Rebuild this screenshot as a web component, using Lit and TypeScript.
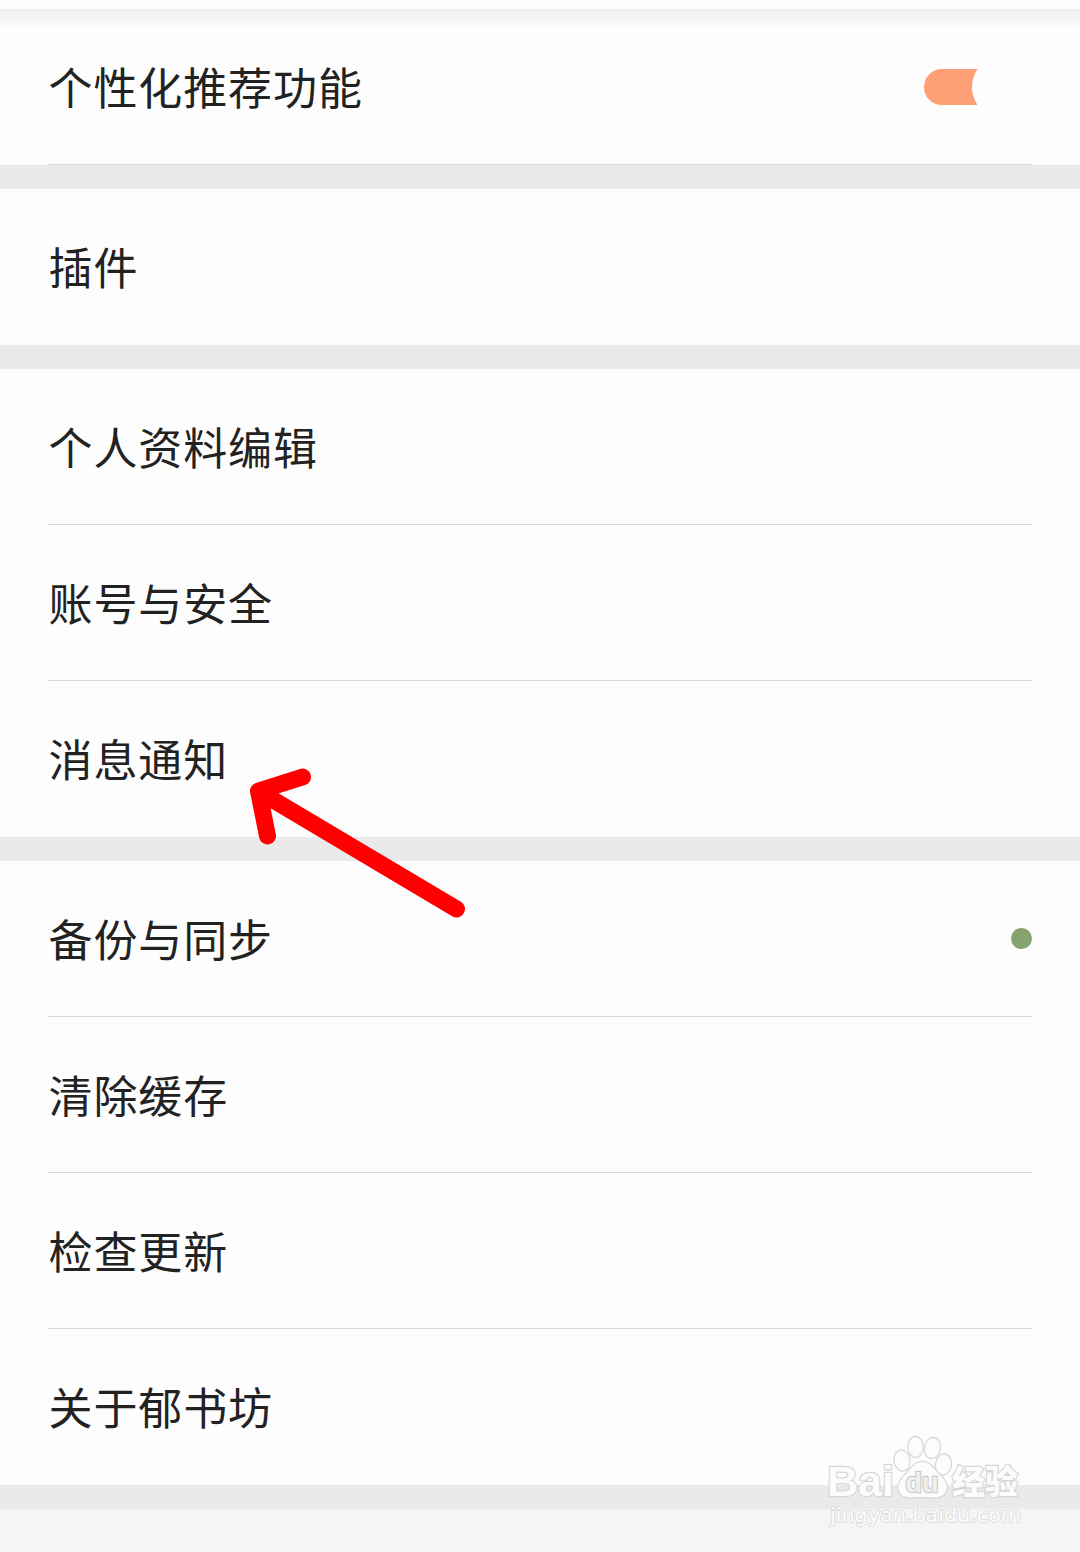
import { LitElement, html, css, svg, nothing } from "lit";
import { customElement, property } from "lit/decorators.js";

interface Item {
  label: string;
  toggle?: boolean;
  dot?: boolean;
  line?: boolean;
}

const groups: Item[][] = [
  [{ label: "个性化推荐功能", toggle: true, line: true }],
  [{ label: "插件" }],
  [
    { label: "个人资料编辑", line: true },
    { label: "账号与安全", line: true },
    { label: "消息通知" },
  ],
  [
    { label: "备份与同步", dot: true, line: true },
    { label: "清除缓存", line: true },
    { label: "检查更新", line: true },
    { label: "关于郁书坊" },
  ],
];

@customElement("setting-row")
export class SettingRow extends LitElement {
  @property({ attribute: false }) item!: Item;

  static styles = css`
    :host {
      display: block;
      padding: 0 48px;
    }
    .row {
      box-sizing: border-box;
      height: 156px;
      display: flex;
      align-items: center;
      justify-content: space-between;
      border-bottom: 1px solid transparent;
    }
    .line {
      border-bottom-color: #d9d9d9;
    }
    .label {
      font-size: 44px;
      letter-spacing: 0.9px;
      line-height: 66px;
      padding: 0 0 1px 0.5px;
      color: #222;
      white-space: nowrap;
    }
    .dot {
      width: 21px;
      height: 21px;
      border-radius: 50%;
      background: #84a36e;
    }
    .toggle {
      display: block;
      width: 108px;
      height: 60px;
    }
  `;

  render() {
    const { label, toggle, dot, line } = this.item;
    return html`<div class="row ${line ? "line" : ""}">
      <span class="label">${label}</span>
      ${toggle
        ? html`<svg class="toggle" viewBox="0 0 108 60" role="switch" aria-checked="true">
            <path d="M18 12H53.5Q43 30 53.5 48H18A18 18 0 0 1 18 12Z" fill="#ff9f75" />
            <circle cx="78" cy="30" r="30" fill="#fefefe" />
          </svg>`
        : nothing}
      ${dot ? html`<span class="dot"></span>` : nothing}
    </div>`;
  }
}

@customElement("app-root")
export class AppRoot extends LitElement {
  static styles = css`
    :host {
      display: block;
      position: relative;
      width: 1080px;
      height: 1552px;
      overflow: hidden;
      background: #f5f5f5;
      font-family: "Noto Sans CJK SC", sans-serif;
    }
    .page {
      display: flex;
      flex-direction: column;
    }
    .bar {
      height: 9px;
      background: #fdfdfd;
    }
    .group {
      background: #fdfdfd;
      border-bottom: 24px solid #eaeaea;
    }
    .first {
      background: linear-gradient(#ededed, #f6f6f6 10px, #fafafa 16px, #fdfdfd 18px);
    }
    .overlay {
      position: absolute;
      inset: 0;
      pointer-events: none;
    }
    .mark {
      fill: #fcfcfc;
      stroke: #d6d6d6;
      stroke-width: 2.4;
      paint-order: stroke;
      stroke-linejoin: round;
    }
    .brand {
      font: bold 43px "Liberation Sans", sans-serif;
    }
    .du {
      font: bold 28px "Liberation Sans", sans-serif;
      fill: #f0f0f0;
      stroke: #cbcbcb;
    }
    .cn {
      font: 900 33px "Noto Sans CJK SC", sans-serif;
    }
    .site {
      font: 20px "DejaVu Sans", sans-serif;
      stroke: #dedede;
      stroke-width: 2;
    }
  `;

  render() {
    return html`
      <div class="page">
        <div class="bar"></div>
        ${groups.map(
          (g, i) => html`<div class="group ${i === 0 ? "first" : ""}">
            ${g.map((item) => html`<setting-row .item=${item}></setting-row>`)}
          </div>`,
        )}
      </div>
      <svg class="overlay" width="1080" height="1552" viewBox="0 0 1080 1552">
        ${svg`
          <path d="M456.500 909L259 791.500M302.500 777L258.500 791L267.500 836" fill="none" stroke="#f00"
            stroke-width="17" stroke-linecap="round" stroke-linejoin="round" />
          <path d="M255 784L284 780L277 794L271 806L261 808Z" fill="#f00" />
          <g class="mark">
            <text class="brand" x="827" y="1496" textLength="67" lengthAdjust="spacingAndGlyphs">Bai</text>
            <ellipse cx="902" cy="1460.500" rx="7.500" ry="10" transform="rotate(-10 902 1460.500)" />
            <ellipse cx="915.500" cy="1447" rx="7.200" ry="10" />
            <ellipse cx="932.500" cy="1448" rx="7.500" ry="10" transform="rotate(10 932.500 1448)" />
            <ellipse cx="943.500" cy="1464.500" rx="7.500" ry="10" transform="rotate(10 943.500 1464.500)" />
            <path d="M922 1462C930 1462 934 1469 940 1475C946 1481 949 1487 945 1493C940 1499.500 931 1497 922 1497C913 1497 905 1499.500 900 1493C896 1487 899 1481 905 1475C911 1469 914 1462 922 1462Z" />
            <text class="du" x="905.500" y="1492" textLength="33" lengthAdjust="spacingAndGlyphs">du</text>
            <text class="cn" x="952" y="1493.500" textLength="66" lengthAdjust="spacingAndGlyphs">经验</text>
            <text class="site" x="830" y="1522" textLength="191" lengthAdjust="spacingAndGlyphs">jingyan.baidu.com</text>
          </g>`}
      </svg>
    `;
  }
}
